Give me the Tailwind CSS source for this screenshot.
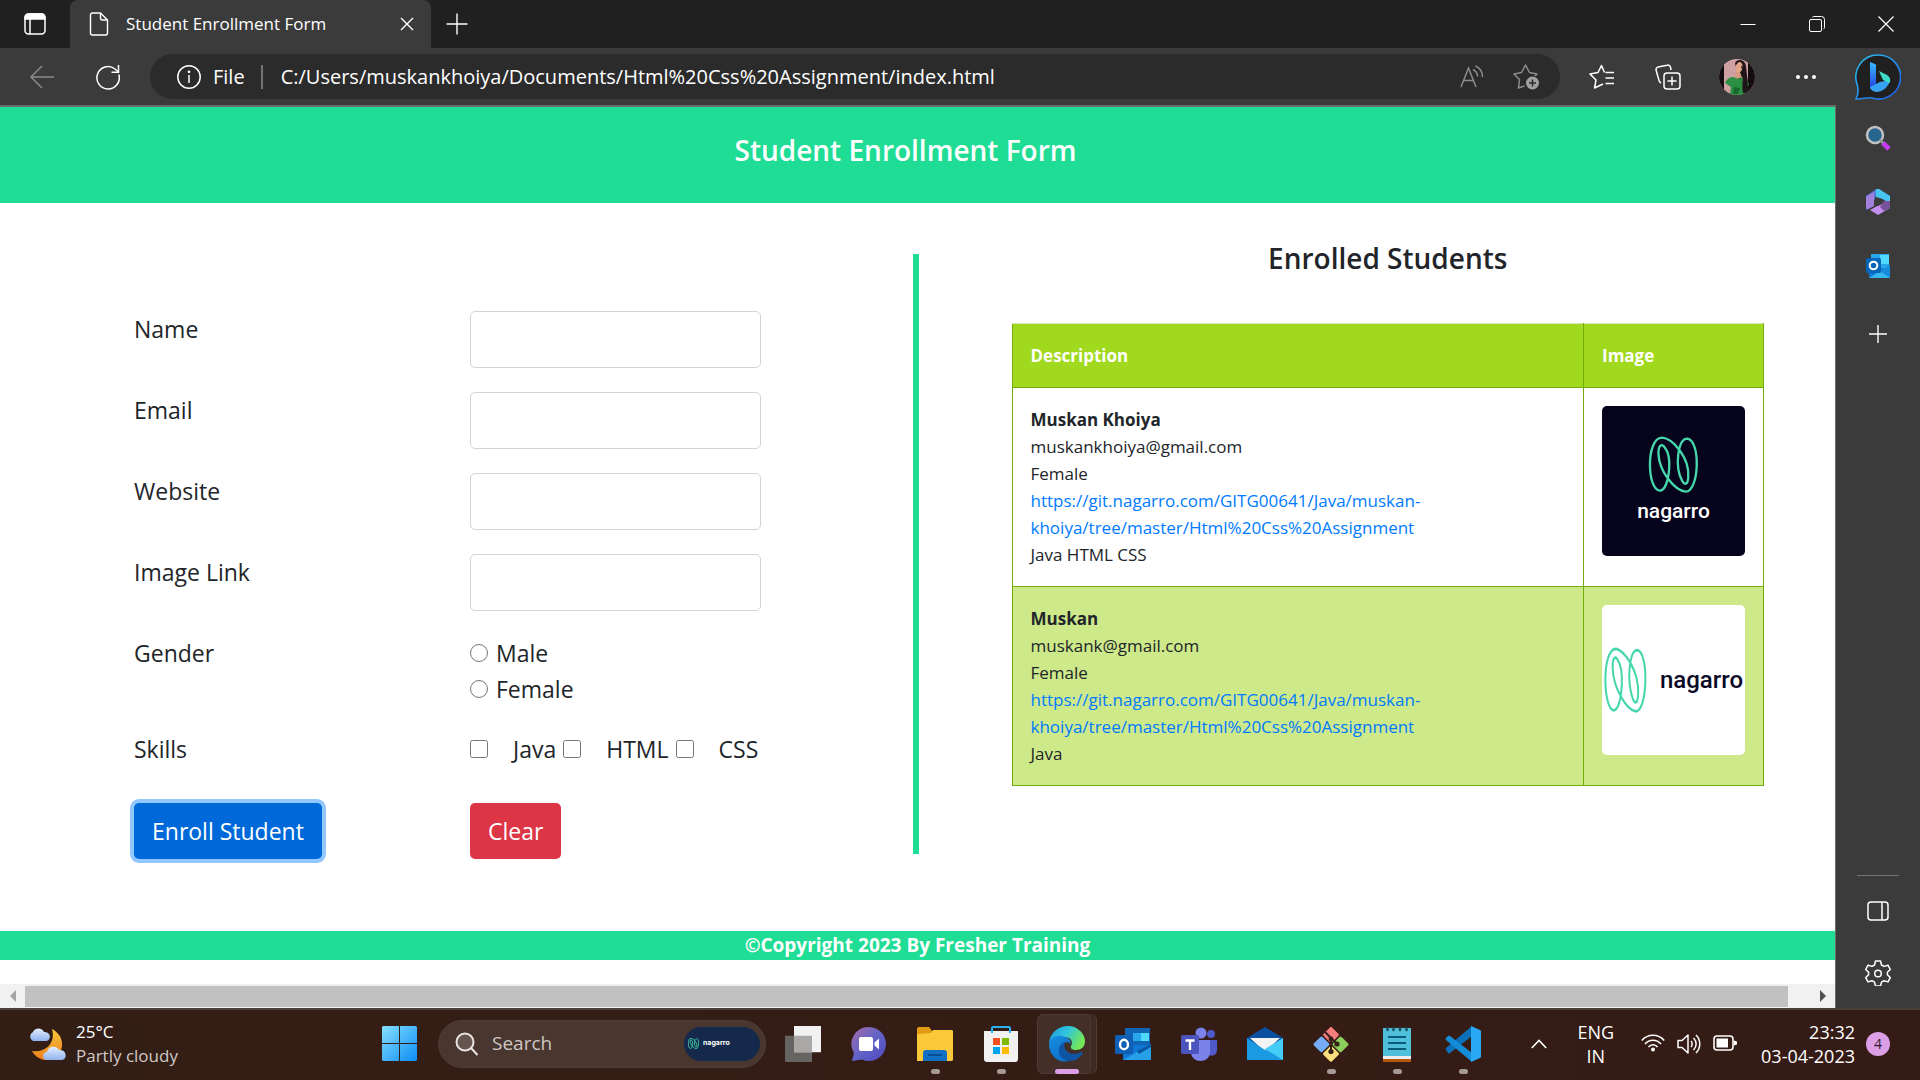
<!DOCTYPE html>
<html lang="en">
<head>
<meta charset="utf-8">
<meta name="viewport" content="width=device-width, initial-scale=1">
<title>Student Enrollment Form</title>
<script src="https://cdn.jsdelivr.net/npm/@tailwindcss/browser@4"></script>
</head>
<body class="flex min-h-screen flex-col bg-[#202020] font-['Open_Sans','Noto_Sans',sans-serif] text-white">

<!-- Title bar -->
<header class="flex h-12 items-stretch bg-[#202020]">
  <button type="button" aria-label="Tab actions" class="flex w-[70px] items-center justify-center">
    <svg class="size-6" viewBox="0 0 24 24" fill="none" stroke="#fff" stroke-width="1.5"><rect x="2" y="2" width="20" height="20" rx="3.5"/><path d="M2 6c0-3 1-4 4-4h12c3 0 4 1 4 4v1H2z" fill="#fff"/><path d="M7 7v15"/></svg>
  </button>
  <div class="flex w-[361px] items-center rounded-t-lg bg-[#3b3b3b] pr-3 pl-[18px]">
    <svg class="h-6 w-[22px] shrink-0" viewBox="0 0 22 24" fill="none" stroke="#fff" stroke-width="1.4" stroke-linejoin="round"><path d="M4.500 1h8l7 7v13a2 2 0 0 1-2 2h-13a2 2 0 0 1-2-2V3a2 2 0 0 1 2-2z"/><path d="M12.500 1v5a2 2 0 0 0 2 2h5"/></svg>
    <span class="ml-4 flex-1 text-[17px] leading-6 whitespace-nowrap">Student Enrollment Form</span>
    <button type="button" aria-label="Close tab" class="p-1"><svg class="size-4" viewBox="0 0 16 16" stroke="#fff" stroke-width="1.4"><path d="M2 2l12 12M14 2L2 14"/></svg></button>
  </div>
  <button type="button" aria-label="New tab" class="flex w-[52px] items-center justify-center"><svg class="size-6" viewBox="0 0 24 24" stroke="#fff" stroke-width="1.400"><path d="M12 1.500v21M1.500 12h21"/></svg></button>
  <div class="ml-auto flex">
    <button type="button" aria-label="Minimize" class="flex w-[69px] items-center justify-center"><svg class="size-4" viewBox="0 0 16 16" stroke="#fff"><path d="M.5 8.500h15"/></svg></button>
    <button type="button" aria-label="Restore" class="flex w-[69px] items-center justify-center"><svg class="size-4" viewBox="0 0 16 16" fill="none" stroke="#fff"><rect x=".5" y="3.500" width="12" height="12" rx="1.500"/><path d="M3.500 1.500c0-.5.5-1 1-1h8a3 3 0 0 1 3 3v8c0 .8-.5 1.500-1 1.500"/></svg></button>
    <button type="button" aria-label="Close window" class="flex w-[69px] items-center justify-center"><svg class="size-4" viewBox="0 0 16 16" stroke="#fff" stroke-width="1.200"><path d="M.5.5l15 15M15.500.5l-15 15"/></svg></button>
  </div>
</header>

<div class="flex flex-1 bg-[#3b3b3b]">
  <div class="flex min-w-0 flex-1 flex-col">

    <!-- Address toolbar -->
    <nav aria-label="Browser toolbar" class="flex h-[57px] items-center bg-[#3b3b3b]">
      <button type="button" aria-label="Back" class="flex w-[84px] justify-center"><svg class="size-6" viewBox="0 0 24 24" fill="none" stroke="#8a8a8a" stroke-width="1.500"><path d="M24 12H1M12 1L1 12l11 11"/></svg></button>
      <button type="button" aria-label="Refresh" class="flex w-12 justify-center"><svg class="h-[26px] w-6" viewBox="0 0 24 26" fill="none" stroke="#fff" stroke-width="1.500"><path d="M22.800 10.500A11.200 11.200 0 1 1 19 5l3.500 3"/><path d="M22.500 1v7.200H15.500"/></svg></button>
      <div class="ml-[18px] flex h-[45px] flex-1 items-center rounded-full bg-[#2b2b2b] pr-[21px] pl-[27px]">
        <svg class="size-6 shrink-0" viewBox="0 0 24 24" fill="none" stroke="#fff" stroke-width="1.500"><circle cx="12" cy="12" r="11.200"/><path d="M12 10v8"/><circle cx="12" cy="6.800" r=".6" fill="#fff"/></svg>
        <span class="ml-3 text-xl">File</span>
        <span class="ml-4 h-6 w-0.5 bg-[#757575]"></span>
        <input aria-label="Address" value="C:/Users/muskankhoiya/Documents/Html%20Css%20Assignment/index.html" class="ml-[18px] min-w-0 flex-1 bg-transparent text-xl outline-none">
        <button type="button" aria-label="Read aloud"><svg class="size-6" viewBox="0 0 24 24" fill="none" stroke="#8c8c8c" stroke-width="1.500"><path d="M1 22L8.500 3 16 22M4 15.500h9M13 4.500c3 1.500 4.500 3.500 4.500 7M15.500 1c4.500 2 7 5.500 7 11"/></svg></button>
        <button type="button" aria-label="Add to favorites" class="ml-[29px]"><svg class="size-[26px]" viewBox="0 0 26 26" fill="none" stroke="#8c8c8c" stroke-width="1.500" stroke-linejoin="round"><path d="M11.500 22L5.500 24l1-8.500L1 10l7.500-1.500L12.500 1l4 7.500L24 10l-2 2"/><circle cx="19.500" cy="19" r="6.500" fill="#a0a0a0" stroke="none"/><path d="M19.500 15.500v7M16 19h7" stroke="#2b2b2b"/></svg></button>
      </div>
      <div class="flex w-[276px] items-center pl-[29px]">
        <button type="button" aria-label="Favorites"><svg class="size-[26px]" viewBox="0 0 26 26" fill="none" stroke="#fff" stroke-width="1.500" stroke-linejoin="round"><path d="M15.500 8.500L12.500 1.500 9 8.500 1 10l6 6-1.500 8L14 20M16.500 8.500H25M16.500 14H25M16.500 19.500H25"/></svg></button>
        <button type="button" aria-label="Collections" class="ml-10"><svg class="size-[26px]" viewBox="0 0 26 26" fill="none" stroke="#fff" stroke-width="1.500" stroke-linejoin="round"><rect x="9" y="9" width="16" height="16" rx="3"/><path d="M17 12.500v9M12.500 17h9M6 19c-1-.5-1.500-1-2-2.500L1.200 6.500c-.5-1.500.3-3 1.800-3.400L12 1.200c1.500-.4 3 .5 3.500 2L16 6"/></svg></button>
        <button type="button" aria-label="Profile" class="ml-[38px] size-9 overflow-hidden rounded-full"><svg class="size-9" viewBox="0 0 36 36"><path fill="#cfa0a2" d="M0 0h36v36H0z"/><path fill="#140c0e" d="M0 0h5v36H0zM29 0h7v36h-7z"/><path fill="#22161a" d="M16 4c2-5 10-4 11 3l3 29h-7z"/><ellipse cx="20" cy="8.500" rx="3.500" ry="5.500" transform="rotate(12 20 8.500)" fill="#e0a486"/><path fill="#d69a7e" d="M17 13h4l2 6h-8z"/><path fill="#2c9044" d="M6 24c2-5 6-6 9-6 2 2 6 2 9 0 4 1 5 4 6 8l-4 3 1 7H11l1-8z"/><path fill="#1c6630" d="M15 28l6 1-2 6h-5z"/><path fill="#21151a" d="M22 7c4 9 0 18 2 27h4c2-10 0-21-5-27z"/></svg></button>
        <button type="button" aria-label="Settings and more" class="ml-10"><svg class="h-1.5 w-[22px]" viewBox="0 0 22 6" fill="#fff"><circle cx="3" cy="3" r="2"/><circle cx="11" cy="3" r="2"/><circle cx="19" cy="3" r="2"/></svg></button>
      </div>
    </nav>

    <!-- Web page -->
    <div class="flex flex-1 flex-col border-t-2 border-r border-[#6b6b6b] bg-white text-[#212529]">
      <div class="flex h-24 items-start justify-center bg-[#1fdd94] pt-[25px] pr-6">
        <h1 class="text-[28px] leading-9 font-semibold text-white">Student Enrollment Form</h1>
      </div>

      <main class="flex">
        <form class="flex w-[calc(50%-5px)] flex-col pt-[108px] pl-[134px] text-[23px] leading-9">
          <div class="grid grid-cols-[336px_291px] gap-y-6">
            <label for="name">Name</label>
            <input id="name" type="text" class="h-[57px] rounded-[5px] border border-[#ced4da] px-3">
            <label for="email">Email</label>
            <input id="email" type="email" class="h-[57px] rounded-[5px] border border-[#ced4da] px-3">
            <label for="website">Website</label>
            <input id="website" type="url" class="h-[57px] rounded-[5px] border border-[#ced4da] px-3">
            <label for="image">Image Link</label>
            <input id="image" type="url" class="h-[57px] rounded-[5px] border border-[#ced4da] px-3">
            <span id="gender">Gender</span>
            <div role="radiogroup" aria-labelledby="gender">
              <label class="flex items-center gap-2"><input type="radio" name="gender" class="size-[18px]">Male</label>
              <label class="flex items-center gap-2"><input type="radio" name="gender" class="size-[18px]">Female</label>
            </div>
            <span id="skills">Skills</span>
            <div role="group" aria-labelledby="skills" class="flex gap-[7px] whitespace-nowrap">
              <label class="flex items-center gap-[25px]"><input type="checkbox" class="size-[18px]">Java</label>
              <label class="flex items-center gap-[25px]"><input type="checkbox" class="size-[18px]">HTML</label>
              <label class="flex items-center gap-[25px]"><input type="checkbox" class="size-[18px]">CSS</label>
            </div>
          </div>
          <div class="mt-9 grid grid-cols-[336px_291px]">
            <div><button type="button" class="h-14 rounded-[5px] bg-[#0069d9] px-[18px] text-white ring-4 ring-[#93c7ff]">Enroll Student</button></div>
            <div><button type="reset" class="h-14 rounded-[5px] bg-[#dc3545] px-[18px] text-white">Clear</button></div>
          </div>
        </form>

        <div class="mt-[51px] h-[600px] w-1.5 shrink-0 bg-[#1fdd94]"></div>

        <section class="flex-1 pt-[37px] pr-[71px] pl-[93px]">
          <h2 class="text-center text-[28px] leading-9 font-semibold">Enrolled Students</h2>
          <table class="mt-[47px] w-full border-collapse text-[17px] leading-[27px]">
            <thead>
              <tr class="bg-[#a0d91d] text-left font-bold text-white">
                <th class="border border-[#73ad0d] border-t-[#d5e3b5] px-[18px] py-[18px]">Description</th>
                <th class="w-[180px] border border-[#73ad0d] border-t-[#d5e3b5] px-[18px] py-[18px]">Image</th>
              </tr>
            </thead>
            <tbody>
              <tr class="align-top">
                <td class="border border-[#73ad0d] p-[18px]">
                  <b>Muskan Khoiya</b><br>muskankhoiya@gmail.com<br>Female<br>
                  <a href="#" class="text-[#007bff]">https://git.nagarro.com/GITG00641/Java/muskan-<br>khoiya/tree/master/Html%20Css%20Assignment</a><br>Java HTML CSS
                </td>
                <td class="border border-[#73ad0d] p-[18px]">
                  <div class="flex h-[150px] flex-col items-center rounded-[5px] bg-[#06031d] pt-[30px] text-white">
                    <svg class="h-[57px] w-[51px]" viewBox="146 108 150 170" fill="none" stroke="#47d7ac" stroke-width="7"><path d="M180 271C142 268 138 116 186 113C216 114 270 170 265 232C263 254 254 255 247 242C236 222 232 190 235 165C239 132 249 116 262 116C303 120 298 274 257 274C225 270 178 215 176 160C176 134 186 130 194 141C206 156 210 180 208 205C206 240 196 271 180 271Z"/></svg>
                    <span class="mt-0.5 font-['Roboto'] text-[21px] leading-8 font-medium">nagarro</span>
                  </div>
                </td>
              </tr>
              <tr class="bg-[#cee98a] align-top">
                <td class="border border-[#73ad0d] p-[18px]">
                  <b>Muskan</b><br>muskank@gmail.com<br>Female<br>
                  <a href="#" class="text-[#007bff]">https://git.nagarro.com/GITG00641/Java/muskan-<br>khoiya/tree/master/Html%20Css%20Assignment</a><br>Java
                </td>
                <td class="border border-[#73ad0d] p-[18px]">
                  <div class="flex h-[150px] items-center justify-between rounded-[5px] bg-white px-0.5 text-[#0b0a26]">
                    <svg class="h-[66px] w-[43px]" viewBox="146 108 150 170" preserveAspectRatio="none" fill="none" stroke="#47d7ac" stroke-width="7"><path d="M180 271C142 268 138 116 186 113C216 114 270 170 265 232C263 254 254 255 247 242C236 222 232 190 235 165C239 132 249 116 262 116C303 120 298 274 257 274C225 270 178 215 176 160C176 134 186 130 194 141C206 156 210 180 208 205C206 240 196 271 180 271Z"/></svg>
                    <span class="font-['Roboto'] text-2xl font-medium">nagarro</span>
                  </div>
                </td>
              </tr>
            </tbody>
          </table>
        </section>
      </main>

      <footer class="mt-[72px] bg-[#1fdd94] text-center text-[19px] leading-[29px] font-bold text-white">©Copyright 2023 By Fresher Training</footer>

      <!-- Horizontal scroll bar -->
      <div class="mt-auto flex h-6 items-center bg-[#f1f1f1]">
        <span class="flex w-[25px] justify-center"><svg class="h-3 w-1.5" viewBox="0 0 6 12" fill="#a3a3a3"><path d="M6 0v12L0 6z"/></svg></span>
        <span class="h-[21px] flex-1 bg-[#c1c1c1]"></span>
        <span class="flex w-[47px] justify-end pr-[9px]"><svg class="h-3 w-1.5" viewBox="0 0 6 12" fill="#505050"><path d="M0 0v12l6-6z"/></svg></span>
      </div>
    </div>
  </div>

  <!-- Browser side bar -->
  <aside class="flex w-[84px] flex-col items-center bg-[#3b3b3b] pt-1.5">
    <button type="button" aria-label="Bing chat"><svg class="size-[46px]" viewBox="0 0 46 46" fill="none"><defs><linearGradient id="bc" x1="0" y1="0" x2="1" y2="1"><stop offset="0" stop-color="#2ac4ee"/><stop offset="1" stop-color="#1b5bea"/></linearGradient><linearGradient id="bb" x1="0" y1="0" x2="0" y2="1"><stop offset="0" stop-color="#37bdff"/><stop offset="1" stop-color="#2340e0"/></linearGradient></defs><path d="M23 1a22 22 0 1 1-6 43c-3-1-9 1-16 1 2-4 3-9 1-15A22 22 0 0 1 23 1z" fill="#202020" stroke="url(#bc)" stroke-width="1.600"/><path d="M15 8l6 2.500v20l-6 4z" fill="url(#bb)"/><path d="M15 33l10-5 10-2c-1 7-8 12-13 12-4 0-7-3-7-5z" fill="#36a2f2"/><path d="M24 17l8 4c3 2 4 5 2.500 8L28 26z" fill="#3bdcc5"/></svg></button>
    <button type="button" aria-label="Search" class="mt-[25px]"><svg class="size-[26px]" viewBox="0 0 26 26"><circle cx="10" cy="10" r="8" fill="#27648e" stroke="#c1c1c1" stroke-width="2.500"/><path d="M15 15l4 4" stroke="#999" stroke-width="2.500"/><path d="M18 18l6 6" stroke="#c23cf0" stroke-width="5"/></svg></button>
    <button type="button" aria-label="Microsoft 365" class="mt-[38px]"><svg class="h-[26px] w-6" viewBox="0 0 24 26"><path fill="#5a7ce2" d="M9 1l3-1 12 7v7l-6-3-8-5-2 6v5l-8 4V7z"/><path fill="#49c5f2" d="M10 0h3l11 7v7l-7-4-7-2z"/><path fill="#a080da" d="M0 8l8-5v14l-6 3-2-1z"/><path fill="#c391ed" d="M4 21l9-5 11-5v8l-12 7z"/><path fill="#765399" d="M18 12l6 0v7l-6 3-4-4z"/><path fill="#3b3b3b" d="M12 9l4 2v4l-4 2-3-2v-4z"/></svg></button>
    <button type="button" aria-label="Outlook" class="mt-[39px]"><svg class="size-6" viewBox="0 0 24 24"><path fill="#28a8ea" d="M5 0h18v16H5z"/><path fill="#50d9ff" d="M14 1h9v9h-9z"/><path fill="#0f78d4" d="M3 14h21v10H3z"/><path fill="#35b8f1" d="M3 24L24 11v13z"/><path fill="#168bdc" d="M24 11v13L14 17z"/><rect y="4" width="15" height="15" rx="1.500" fill="#0364b8"/><circle cx="7.500" cy="11.500" r="3.800" fill="none" stroke="#fff" stroke-width="2"/></svg></button>
    <button type="button" aria-label="Customize" class="mt-[46px]"><svg class="size-5" viewBox="0 0 20 20" stroke="#fff" stroke-width="1.400"><path d="M10 1v18M1 10h18"/></svg></button>
    <div class="mt-auto h-px w-[42px] bg-[#757575]"></div>
    <button type="button" aria-label="Hide sidebar" class="mt-6"><svg class="size-[22px]" viewBox="0 0 22 22" fill="none" stroke="#fff" stroke-width="1.500"><rect x="1" y="2" width="20" height="18" rx="3"/><path d="M15 2v18"/></svg></button>
    <button type="button" aria-label="Settings" class="mt-[38px] mb-[22px]"><svg class="size-[26px]" viewBox="0 0 26 26" fill="none" stroke="#fff" stroke-width="1.500" stroke-linejoin="round"><path d="M10.500 1h5l1 4 2.500 1.400 4-1.200 2.300 4.300-2.900 2.800v2.500l2.900 2.800-2.300 4.300-4-1.200-2.500 1.400-1 3.900h-5l-1-3.900L7 20.700l-4 1.200L.7 17.600l2.900-2.800v-2.500L.7 9.500 3 5.200l4 1.200L9.500 5z"/><circle cx="13" cy="13.500" r="3.300"/></svg></button>
  </aside>
</div>

<!-- Task bar -->
<footer class="grid h-[72px] grid-cols-[382px_auto_1fr] items-center border-t-2 border-[#4b4039] bg-linear-to-r from-[#331e15] to-[#351b15] pb-[3px]">
  <div class="flex items-center gap-[10px] pl-7">
    <svg class="h-9 w-[38px]" viewBox="0 0 38 36"><defs><linearGradient id="moon" x1="0" y1="0" x2="0" y2="1"><stop offset="0" stop-color="#f4c63c"/><stop offset="1" stop-color="#ee7f1a"/></linearGradient><linearGradient id="cloud" x1="0" y1="0" x2="0" y2="1"><stop offset="0" stop-color="#e4eeff"/><stop offset="1" stop-color="#8fb3ee"/></linearGradient></defs><path fill="url(#moon)" d="M24 3c10 5 13 16 7 25-7 9-21 8-27-3 14 2 24-8 20-22z"/><path fill="url(#cloud)" d="M5 15a5 5 0 0 1 0-9 6 6 0 0 1 11 0c8 0 7 9 2 9z"/><path fill="url(#cloud)" d="M20 34c-7 0-6-8-1-8a6.500 6.500 0 0 1 12-2c8-1 9 10 2 10z"/></svg>
    <div class="text-[17px] leading-6"><div>25°C</div><div class="text-[#cfc8c5]">Partly cloudy</div></div>
  </div>

  <div class="flex items-center">
    <button type="button" aria-label="Start"><svg class="size-[35px]" viewBox="0 0 35 35"><defs><linearGradient id="win" gradientUnits="userSpaceOnUse" x1="0" y1="0" x2="35" y2="35"><stop offset="0" stop-color="#86e0ff"/><stop offset="1" stop-color="#0b8cf4"/></linearGradient></defs><path fill="url(#win)" d="M1 0h16v17H0V1zM18 0h16l1 1v16H18zM0 18h17v17H1l-1-1zM18 18h17v16l-1 1H18z"/></svg></button>
    <label class="ml-[21px] flex h-12 w-[328px] items-center rounded-full border border-[#4f3d35] bg-[#49362e] pr-[5px] pl-4">
      <svg class="size-6 shrink-0" viewBox="0 0 24 24" fill="none" stroke="#e8e4e2" stroke-width="2"><circle cx="10" cy="10" r="8.500" fill="#66554e"/><path d="M16 16l6.500 7"/></svg>
      <input type="search" aria-label="Search" placeholder="Search" class="ml-[13px] w-0 flex-1 bg-transparent text-[19px] outline-none placeholder:text-[#cfc8c5]">
      <span class="flex h-[34px] w-[76px] items-center gap-1 rounded-full bg-[#14294c] pl-1 font-['Inter'] text-[7px] font-bold">
        <svg class="size-[11px]" viewBox="146 108 150 170" preserveAspectRatio="none" fill="none" stroke="#47d7ac" stroke-width="12"><path d="M180 271C142 268 138 116 186 113C216 114 270 170 265 232C263 254 254 255 247 242C236 222 232 190 235 165C239 132 249 116 262 116C303 120 298 274 257 274C225 270 178 215 176 160C176 134 186 130 194 141C206 156 210 180 208 205C206 240 196 271 180 271Z"/></svg>nagarro
      </span>
    </label>
    <div class="ml-1 flex">
      <button type="button" aria-label="Task view" class="flex h-[60px] w-[66px] items-center justify-center"><svg class="size-9" viewBox="0 0 36 48" preserveAspectRatio="none"><path fill="#666462" d="M0 13h27v35H0z"/><path fill="#f1f1f1" d="M9 0h27v35H9z"/><path fill="#aaa8a7" d="M9 13h18v22H9z"/></svg></button>
      <button type="button" aria-label="Chat" class="flex h-[60px] w-[66px] items-center justify-center"><svg class="size-9" viewBox="0 0 36 36"><defs><linearGradient id="ch" x1="0" y1="0" x2="1" y2="1"><stop offset="0" stop-color="#a66ba8"/><stop offset=".5" stop-color="#6264c7"/><stop offset="1" stop-color="#5048c0"/></linearGradient></defs><path fill="url(#ch)" d="M18 1a17 17 0 1 1-7 32.500L1 35l2-8A17 17 0 0 1 18 1z"/><rect x="8" y="11" width="14" height="14" rx="2" fill="#fff"/><path fill="#fff" d="M23.500 16.500L28 12.500v11l-4.500-4z"/></svg></button>
      <button type="button" aria-label="File Explorer" class="relative flex h-[60px] w-[66px] items-center justify-center"><svg class="size-9" viewBox="0 0 36 36"><path fill="#e39b13" d="M0 3q0-2 2-2h10l3 4v6H0z"/><path fill="#fbc937" d="M0 8l14-1 2-3h19l1 1v29l-1 1H0z"/><path fill="#1170c4" d="M6 35V27q0-3 3-3h18q3 0 3 3v8z"/><path stroke="#0b4d91" stroke-width="2" d="M11 29h14"/></svg><i class="absolute bottom-0 h-[5px] w-[9px] rounded-full bg-[#a59a95]"></i></button>
      <button type="button" aria-label="Store" class="relative flex h-[60px] w-[66px] items-center justify-center"><svg class="size-9" viewBox="0 0 36 36"><path fill="none" stroke="#2bb2f0" stroke-width="2" d="M9 7V2q0-1 1-1h16q1 0 1 1v5"/><path fill="#f1f1f1" d="M1 5h34v28q0 3-3 3H4q-3 0-3-3z"/><path fill="#f25022" d="M10 12h7v7h-7z"/><path fill="#7fba00" d="M19 12h7v7h-7z"/><path fill="#00a4ef" d="M10 21h7v7h-7z"/><path fill="#ffb900" d="M19 21h7v7h-7z"/><path stroke="#2bb2f0" stroke-width="2" d="M9 5v2M27 5v2"/></svg><i class="absolute bottom-0 h-[5px] w-[9px] rounded-full bg-[#a59a95]"></i></button>
      <button type="button" aria-label="Edge" class="relative flex h-[60px] w-[66px] items-center justify-center"><span class="absolute inset-y-0 left-1.5 w-[57px] rounded-md border-r border-[#4e3c34] bg-[#3d2a21]"></span><span class="absolute inset-y-0 left-[3px] w-[54px] rounded-md border border-[#4e3c34] bg-[#432f27]"></span><svg class="relative size-9" viewBox="0 0 36 36"><defs><linearGradient id="e1" x1="0" y1="0" x2="1" y2=".4"><stop offset="0" stop-color="#1c95e0"/><stop offset=".5" stop-color="#2fc3df"/><stop offset="1" stop-color="#72e85a"/></linearGradient><linearGradient id="e2" x1="0" y1="0" x2=".6" y2="1"><stop offset="0" stop-color="#178fe0"/><stop offset="1" stop-color="#0d6fc9"/></linearGradient></defs><path fill="url(#e1)" d="M0 17C1 7 9 0 19 0c10 0 17 8 17 15 0 6-4 9-9 9-4 0-6-2-5-4 3-5-1-9-7-9C8 11 3 13 0 17z"/><path fill="url(#e2)" d="M0 18C1 11 9 8 16 11c4 1 6 4 6 7-3-3-8-2-10 2-3 6 1 13 8 15C9 38 0 29 0 18z"/><path fill="#0f55a3" d="M16 16c-7 2-8 11-3 16 4 3 9 4 13 2 3-1 6-4 8-7-1-1-2-1-4 0-8 3-17-2-14-11z"/></svg><i class="absolute bottom-0 h-[5px] w-6 rounded-full bg-[#dc9ee6]"></i></button>
      <button type="button" aria-label="Outlook" class="flex h-[60px] w-[66px] items-center justify-center"><svg class="size-9" viewBox="0 0 36 36"><path fill="#1066b5" d="M10 2h25v20H10z"/><path fill="#28a8ea" d="M18 7h8v8h-8z"/><path fill="#50d9ff" d="M26 7h8v8h-8z"/><path fill="#0f78d4" d="M8 19h28v15H8z"/><path fill="#28a0e8" d="M8 34l28-16v15l-1 1z"/><path fill="#0a57a3" d="M22 25l14-7v3L24 28z"/><rect y="9" width="18" height="19" rx="1.500" fill="#0f5fb5"/><ellipse cx="9" cy="18.500" rx="4" ry="4.700" fill="none" stroke="#fff" stroke-width="2.400"/></svg></button>
      <button type="button" aria-label="Teams" class="flex h-[60px] w-[66px] items-center justify-center"><svg class="size-9" viewBox="0 0 36 36"><circle cx="30" cy="8" r="4" fill="#5059c9"/><path fill="#5059c9" d="M26 14h10v10c0 6-6 7-10 4z"/><circle cx="20" cy="7" r="5.500" fill="#7b83eb"/><path fill="#7b83eb" d="M10 14h19v12c0 12-19 12-19 0z"/><rect y="9" width="18" height="19" rx="1.500" fill="#4b53bc"/><path stroke="#fff" stroke-width="2.400" d="M4.500 14.500h9M9 14.500V24"/></svg></button>
      <button type="button" aria-label="Mail" class="flex h-[60px] w-[66px] items-center justify-center"><svg class="size-9" viewBox="0 0 36 36"><path fill="#0b4fa0" d="M0 12L18 1l18 11v6H0z"/><path fill="#f3f3f3" d="M3 12h30L18 26z"/><path fill="#1a9ae2" d="M0 12l18 12 18-12v22H0z"/><path fill="#45ccf8" d="M36 12v22L18 23z"/></svg></button>
      <button type="button" aria-label="Git Bash" class="relative flex h-[60px] w-[66px] items-center justify-center"><svg class="size-9" viewBox="0 0 36 36"><g transform="rotate(45 18 18)"><rect x="5.500" y="5.500" width="12" height="12" rx="1.500" fill="#f77c7c"/><rect x="19" y="5.500" width="12" height="12" rx="1.500" fill="#8dcf5c"/><rect x="5.500" y="19" width="12" height="12" rx="1.500" fill="#76acf5"/><rect x="19" y="19" width="12" height="12" rx="1.500" fill="#fce07d"/></g><path d="M12 6l12 12M18 12v14" stroke="#342018" stroke-width="2"/><circle cx="18" cy="25.500" r="2.600" fill="#342018"/><circle cx="24" cy="18" r="2.600" fill="#342018"/><circle cx="18" cy="13" r="2.400" fill="#342018"/></svg><i class="absolute bottom-0 h-[5px] w-[9px] rounded-full bg-[#a59a95]"></i></button>
      <button type="button" aria-label="Notepad" class="relative flex h-[60px] w-[66px] items-center justify-center"><svg class="size-9" viewBox="0 0 36 36"><path fill="#b8580e" d="M4 30h28v6H4z"/><path fill="#eee" d="M4 29h28v4H4z"/><path fill="#50c0da" d="M4 2h28v28H4z"/><path stroke="#075d77" stroke-width="2" d="M9 11h18M9 17h18M9 23h18"/><path stroke="#174e60" stroke-width="2.500" stroke-linecap="round" d="M8.500 2v2M14.500 2v2M21 2v2M27.500 2v2"/></svg><i class="absolute bottom-0 h-[5px] w-[9px] rounded-full bg-[#a59a95]"></i></button>
      <button type="button" aria-label="Visual Studio Code" class="relative flex h-[60px] w-[66px] items-center justify-center"><svg class="size-9" viewBox="0 0 36 36"><path fill="#0b6fba" d="M1 22q-1 1 0 2l2 3q1 1 2 0L27 10V0z"/><path fill="#148dd8" d="M1 14q-1-1 0-2l2-2q1-1 2 0l22 17v9z"/><path fill="#28a8f5" d="M26 0l9 4 1 1v26l-1 1-9 4z"/></svg><i class="absolute bottom-0 h-[5px] w-[9px] rounded-full bg-[#a59a95]"></i></button>
    </div>
  </div>

  <div class="flex items-center justify-end pr-[30px] text-lg leading-6">
    <svg class="h-2.5 w-4" viewBox="0 0 16 10" fill="none" stroke="#fff" stroke-width="1.600"><path d="M.8 9L8 1.500 15.200 9"/></svg>
    <div class="ml-[30px] text-center"><div>ENG</div><div>IN</div></div>
    <div class="ml-[27px] flex gap-3">
      <svg class="h-[18px] w-6" viewBox="0 0 24 18" fill="none" stroke="#fff" stroke-width="1.600"><path d="M.8 6.500c6-7 16.400-7 22.400 0M4 10c4.500-5 11.500-5 16 0M7.500 13c2.500-3 6.500-3 9 0"/><circle cx="12" cy="15.500" r="2" fill="#fff" stroke="none"/></svg>
      <svg class="h-5 w-6" viewBox="0 0 24 20" fill="none" stroke="#fff" stroke-width="1.500" stroke-linejoin="round"><path d="M1 6.500h4L11 1v18l-6-5.500H1zM14 7c1.500 1.500 1.500 4.500 0 6M16.500 4c3.500 3.500 3.500 8.500 0 12M19 1c5 5 5 13 0 18"/></svg>
      <svg class="h-[18px] w-6" viewBox="0 0 24 18"><rect x="1" y="2" width="19" height="14" rx="3" fill="none" stroke="#fff" stroke-width="1.600"/><path fill="#fff" d="M3.500 4.500H15v9H3.500zM21 6.500l3 1v3l-3 1z"/></svg>
    </div>
    <div class="ml-6 text-right whitespace-nowrap"><div>23:32</div><div>03-04-2023</div></div>
    <span class="ml-[11px] flex size-6 items-center justify-center rounded-full bg-[#dc9ee6] text-sm text-[#2c1a2e]">4</span>
  </div>
</footer>
</body>
</html>
